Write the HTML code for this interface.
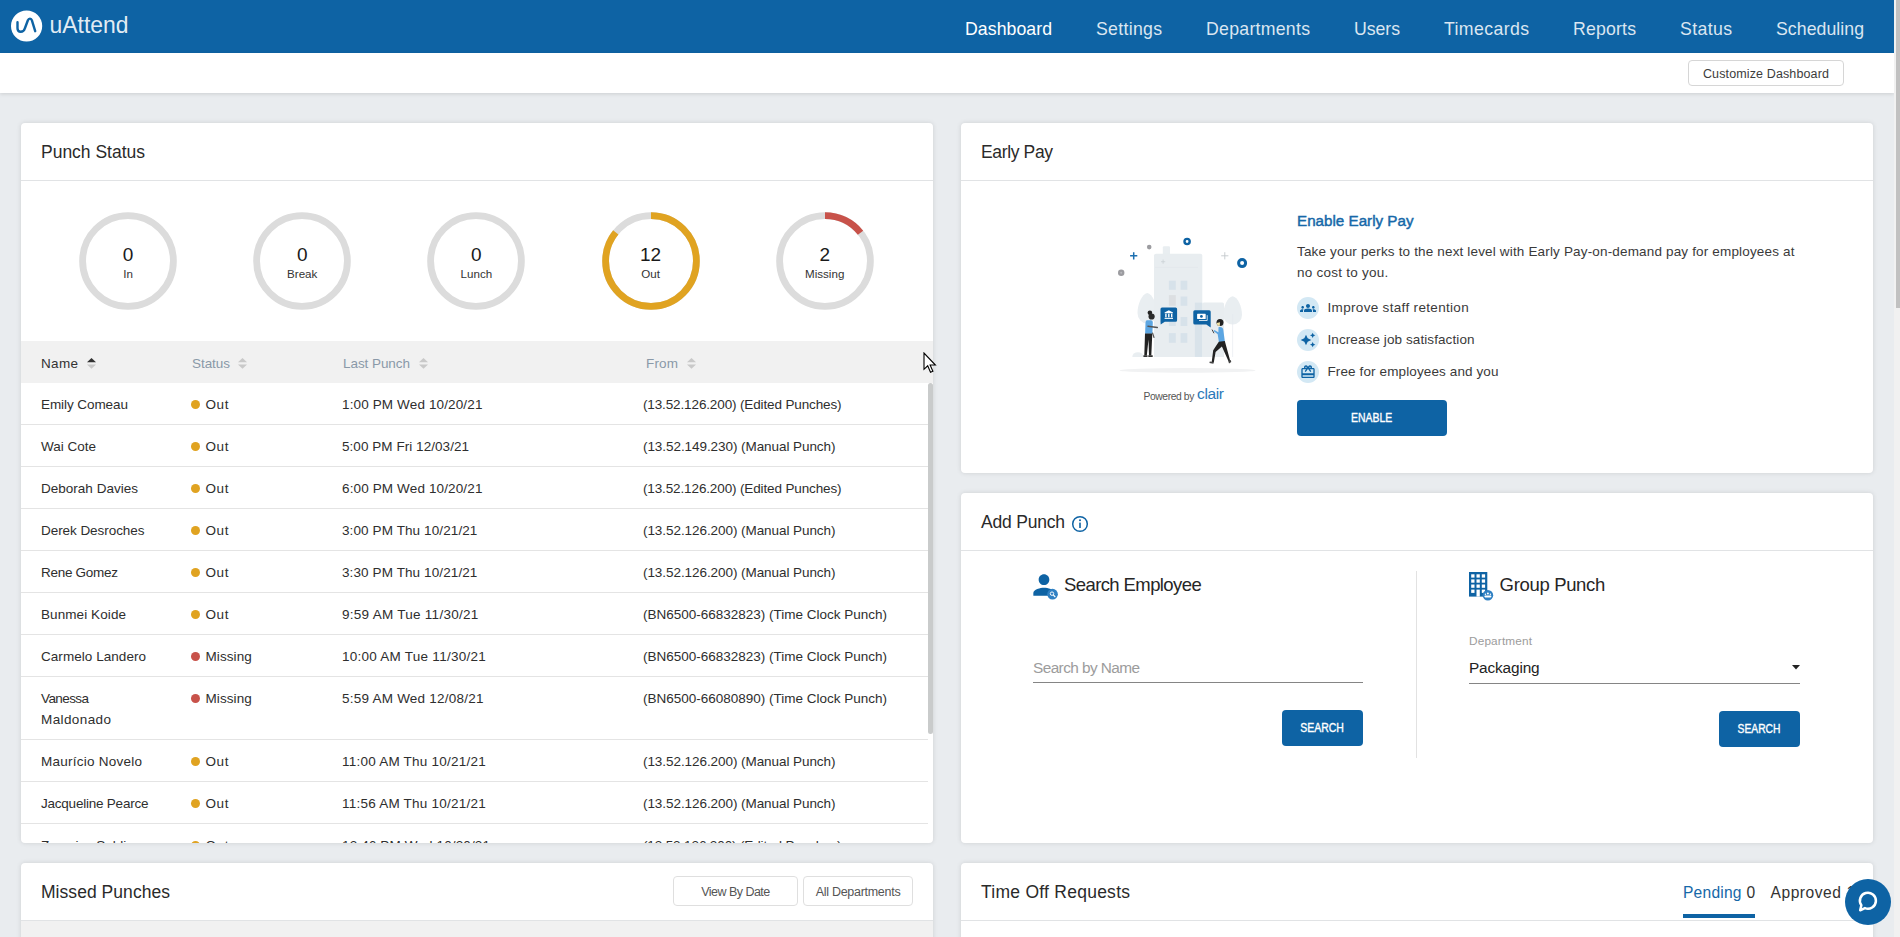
<!DOCTYPE html><html lang="en"><head>
<meta charset="utf-8">
<title>uAttend - Dashboard</title>
<style>
*{box-sizing:border-box;margin:0;padding:0}
html,body{width:1900px;height:937px;overflow:hidden}
body{background:#e9ecef;font-family:"Liberation Sans",sans-serif;font-size:13.5px;color:#212529;position:relative}
.t{position:absolute;white-space:pre;line-height:20px}
#topbar{position:absolute;left:0;top:0;width:1894px;height:53px;background:#0e63a4}
#topbar .nav{position:absolute;top:18px;font-size:17.7px;line-height:22px;color:#dbe6f1;white-space:pre}
#topbar .nav.active{color:#fff}
#subbar{position:absolute;left:0;top:53px;width:1894px;height:40px;background:#fff;box-shadow:0 1px 4px rgba(0,0,0,.13)}
#custbtn{position:absolute;left:1688px;top:7px;width:156px;height:26px;border:1px solid #d6d6d6;border-radius:4px;background:#fff;font-size:12.5px;color:#3c3c3c;text-align:center;line-height:26px}
#pagescroll{position:absolute;left:1894px;top:0;width:6px;height:937px;background:#f1f1f1}
#pagescroll div{position:absolute;left:2px;top:0;width:4px;height:308px;background:#c1c1c1}
.panel{position:absolute;background:#fff;border-radius:4px;box-shadow:0 0 5px rgba(0,0,0,.12);overflow:hidden}
.panel .ph{position:absolute;left:0;top:0;right:0;height:58px;border-bottom:1px solid #e1e3e5}
.panel .ph .title{position:absolute;left:20px;top:17px;font-size:17.5px;line-height:24px;white-space:pre;color:#2a2a2a}

#rings{position:absolute;left:0;top:89px;width:912px;height:98px}
.ring{position:absolute;top:0;width:98px;height:98px;text-align:center}
.ring svg{position:absolute;left:0;top:0}
.ring .num{position:absolute;left:0;width:98px;top:30.6px;font-size:19px;line-height:24px;color:#1a1a1a}
.ring .lbl{position:absolute;left:0;width:98px;top:53.5px;font-size:11.6px;line-height:16px;color:#333}
#thead{position:absolute;left:0;top:218px;width:912px;height:42px;background:#f1f1f1}
#thead .th{position:absolute;top:12px;line-height:21px;font-size:13.5px;color:#8a99a8;white-space:pre}
#thead .th.act{color:#333}
#thead .sort{position:absolute;top:17px}
#tbody{position:absolute;left:0;top:260px;width:907px}
.tr{position:relative;border-bottom:1px solid #e4e4e4;padding:11px 0 9px;line-height:21px;min-height:42px;color:#2e2e2e;white-space:pre}
.tr .c1{margin-left:20px;width:130px}
.tr .c2{position:absolute;left:170px;top:11px}
.tr .c3{position:absolute;left:321px;top:11px}
.tr .c4{position:absolute;left:622px;top:11px}
.dot{display:inline-block;width:9px;height:9px;border-radius:50%;margin-right:5.5px;vertical-align:0px}
.dot.out{background:#e0a321}.dot.mis{background:#c8524a}
#tscroll{position:absolute;left:907px;top:260px;width:5px;height:351px;background:#c9cbcb;border-radius:3px}

.btnp{position:absolute;background:#0e63a4;color:#fff;border-radius:4px;text-align:center;font-size:12px;white-space:pre}
.btnp span{display:inline-block;-webkit-text-stroke:.35px #fff}
.btno{position:absolute;top:13px;height:30px;border:1px solid #dfdfdf;border-radius:4px;background:#fff;color:#555;font-size:12.5px;line-height:30px;text-align:center;white-space:pre}
#ep-h{position:absolute;left:336px;top:86.5px;font-size:15.2px;line-height:22px;color:#1668a8;-webkit-text-stroke:.45px #1668a8;white-space:pre}
.ep-p{position:absolute;left:336px;font-size:13.5px;line-height:21px;color:#3a3a3a;white-space:pre}
.ep-li{position:absolute;left:336px;height:22px;line-height:22px;font-size:13.5px;color:#3a3a3a;white-space:pre}
.ep-li .ic{position:absolute;left:0;top:0;width:22px;height:22px;border-radius:50%;background:#d3e8f4}
.ep-li .ic svg{position:absolute;left:3px;top:3px}
.ep-li .tx{position:absolute;left:30.5px;top:0}
#illus{position:absolute;left:149px;top:107px}
#pby{position:absolute;left:182.5px;top:267px;font-size:10.3px;line-height:14px;color:#555;white-space:pre}
#clair{position:absolute;left:236px;top:260.5px;font-size:15.5px;line-height:20px;color:#2b79b9;white-space:pre}
.ap-h{position:absolute;top:80px;font-size:18.5px;line-height:24px;color:#262626;white-space:pre}
#ap-div{position:absolute;left:455px;top:78px;width:1px;height:187px;background:#e2e2e2}
.ul{position:absolute;height:1px;background:#858585}
#sbn{position:absolute;left:72px;top:164px;font-size:15.4px;line-height:22px;color:#9c9c9c;white-space:pre}
#deptl{position:absolute;left:508px;top:140px;font-size:11.8px;line-height:16px;color:#9c9c9c;white-space:pre}
#deptv{position:absolute;left:508px;top:164px;font-size:15.4px;line-height:22px;color:#222;white-space:pre}
#tabs .tb{position:absolute;top:19px;font-size:15.6px;line-height:22px;white-space:pre;color:#333}
#chat{position:absolute;left:1845px;top:879px;width:46px;height:46px;border-radius:50%;background:#0e63a4}
#mthead{position:absolute;left:0;top:58px;width:912px;height:42px;background:#f1f1f1}
</style>
</head>
<body>
<div id="topbar">
  <svg id="logo" style="position:absolute;left:11px;top:10px" width="130" height="34" viewBox="0 0 130 34"><circle cx="15.6" cy="16" r="15.6" fill="#fff"></circle><path d="M6.500 12.300V18.200C6.500 23 12.600 23 13.900 18.200L16.900 10.300C17.700 8 20.200 8 20.900 10.300L24.200 21.200" fill="none" stroke="#0e63a4" stroke-width="2.400" stroke-linecap="round" stroke-linejoin="round"></path><text x="38.600" y="23.350" font-family="Liberation Sans, sans-serif" font-size="23.200" fill="#fff" fill-opacity=".9" textLength="79" lengthAdjust="spacingAndGlyphs">uAttend</text></svg>
  <span class="nav active" style="left: 965px; letter-spacing: 0.059px;">Dashboard</span>
  <span class="nav" style="left: 1096px; letter-spacing: 0.297px;">Settings</span>
  <span class="nav" style="left: 1206px; letter-spacing: 0.273px;">Departments</span>
  <span class="nav" style="left: 1354px; letter-spacing: -0.051px;">Users</span>
  <span class="nav" style="left: 1444px; letter-spacing: 0.387px;">Timecards</span>
  <span class="nav" style="left: 1573px; letter-spacing: 0.177px;">Reports</span>
  <span class="nav" style="left: 1680px; letter-spacing: 0.369px;">Status</span>
  <span class="nav" style="left: 1776px; letter-spacing: 0.052px;">Scheduling</span>
</div>
<div id="subbar"><div id="custbtn"><span style="letter-spacing: 0.129px;">Customize Dashboard</span></div></div>
<div id="pagescroll"><div></div></div>

<!-- PUNCH STATUS -->
<div class="panel" id="p-punch" style="left:21px;top:123px;width:912px;height:720px">
  <div class="ph"><span class="title" style="letter-spacing: -0.01px;">Punch Status</span></div>
<div id="rings"><div class="ring" style="left:58.0px"><svg width="98" height="98" viewBox="0 0 98 98"><circle cx="49" cy="49" r="45.4" fill="none" stroke="#dcdcdc" stroke-width="6.8"></circle></svg><div class="num">0</div><div class="lbl">In</div></div><div class="ring" style="left:232.2px"><svg width="98" height="98" viewBox="0 0 98 98"><circle cx="49" cy="49" r="45.4" fill="none" stroke="#dcdcdc" stroke-width="6.8"></circle></svg><div class="num">0</div><div class="lbl">Break</div></div><div class="ring" style="left:406.4px"><svg width="98" height="98" viewBox="0 0 98 98"><circle cx="49" cy="49" r="45.4" fill="none" stroke="#dcdcdc" stroke-width="6.8"></circle></svg><div class="num">0</div><div class="lbl">Lunch</div></div><div class="ring" style="left:580.6px"><svg width="98" height="98" viewBox="0 0 98 98"><circle cx="49" cy="49" r="45.4" fill="none" stroke="#dcdcdc" stroke-width="6.8"></circle><circle cx="49" cy="49" r="45.4" fill="none" stroke="#e0a321" stroke-width="6.8" stroke-dasharray="244.51 285.26" transform="rotate(-90 49 49)"></circle></svg><div class="num">12</div><div class="lbl">Out</div></div><div class="ring" style="left:754.7px"><svg width="98" height="98" viewBox="0 0 98 98"><circle cx="49" cy="49" r="45.4" fill="none" stroke="#dcdcdc" stroke-width="6.8"></circle><circle cx="49" cy="49" r="45.4" fill="none" stroke="#c8524a" stroke-width="6.8" stroke-dasharray="40.75 285.26" transform="rotate(-90 49 49)"></circle></svg><div class="num">2</div><div class="lbl">Missing</div></div></div>
<div id="thead"><span class="th act" style="left: 20px; letter-spacing: 0.328px;">Name</span><svg class="sort" style="left:65.5px" width="9" height="11" viewBox="0 0 9 11"><path d="M0 4.3 L4.5 0 L9 4.3Z" fill="#333"></path><path d="M0 6.4 L4.5 10.7 L9 6.4Z" fill="#c9c9c9"></path></svg><span class="th" style="left: 171px; letter-spacing: -0.056px;">Status</span><svg class="sort" style="left:217px" width="9" height="11" viewBox="0 0 9 11"><path d="M0 4.3 L4.5 0 L9 4.3Z" fill="#c9c9c9"></path><path d="M0 6.4 L4.5 10.7 L9 6.4Z" fill="#c9c9c9"></path></svg><span class="th" style="left: 322px; letter-spacing: -0.061px;">Last Punch</span><svg class="sort" style="left:397.5px" width="9" height="11" viewBox="0 0 9 11"><path d="M0 4.3 L4.5 0 L9 4.3Z" fill="#c9c9c9"></path><path d="M0 6.4 L4.5 10.7 L9 6.4Z" fill="#c9c9c9"></path></svg><span class="th" style="left: 625px; letter-spacing: 0.167px;">From</span><svg class="sort" style="left:665.5px" width="9" height="11" viewBox="0 0 9 11"><path d="M0 4.3 L4.5 0 L9 4.3Z" fill="#c9c9c9"></path><path d="M0 6.4 L4.5 10.7 L9 6.4Z" fill="#c9c9c9"></path></svg></div>
<div id="tbody">
<div class="tr"><div class="c1"><span style="letter-spacing: -0.071px;">Emily Comeau</span></div><div class="c2"><i class="dot out"></i><span style="letter-spacing: 0.617px;">Out</span></div><div class="c3"><span style="letter-spacing: 0.135px;">1:00 PM Wed 10/20/21</span></div><div class="c4"><span style="letter-spacing: -0.13px;">(13.52.126.200) (Edited Punches)</span></div></div>
<div class="tr"><div class="c1"><span style="letter-spacing: -0.002px;">Wai Cote</span></div><div class="c2"><i class="dot out"></i><span style="letter-spacing: 0.617px;">Out</span></div><div class="c3"><span style="letter-spacing: 0.049px;">5:00 PM Fri 12/03/21</span></div><div class="c4"><span style="letter-spacing: -0.065px;">(13.52.149.230) (Manual Punch)</span></div></div>
<div class="tr"><div class="c1"><span style="letter-spacing: 0.014px;">Deborah Davies</span></div><div class="c2"><i class="dot out"></i><span style="letter-spacing: 0.617px;">Out</span></div><div class="c3"><span style="letter-spacing: 0.135px;">6:00 PM Wed 10/20/21</span></div><div class="c4"><span style="letter-spacing: -0.13px;">(13.52.126.200) (Edited Punches)</span></div></div>
<div class="tr"><div class="c1"><span style="letter-spacing: -0.057px;">Derek Desroches</span></div><div class="c2"><i class="dot out"></i><span style="letter-spacing: 0.617px;">Out</span></div><div class="c3"><span style="letter-spacing: 0.107px;">3:00 PM Thu 10/21/21</span></div><div class="c4"><span style="letter-spacing: -0.065px;">(13.52.126.200) (Manual Punch)</span></div></div>
<div class="tr"><div class="c1"><span style="letter-spacing: -0.283px;">Rene Gomez</span></div><div class="c2"><i class="dot out"></i><span style="letter-spacing: 0.617px;">Out</span></div><div class="c3"><span style="letter-spacing: 0.107px;">3:30 PM Thu 10/21/21</span></div><div class="c4"><span style="letter-spacing: -0.065px;">(13.52.126.200) (Manual Punch)</span></div></div>
<div class="tr"><div class="c1"><span style="letter-spacing: 0.085px;">Bunmei Koide</span></div><div class="c2"><i class="dot out"></i><span style="letter-spacing: 0.617px;">Out</span></div><div class="c3"><span style="letter-spacing: 0.273px;">9:59 AM Tue 11/30/21</span></div><div class="c4"><span style="letter-spacing: -0.004px;">(BN6500-66832823) (Time Clock Punch)</span></div></div>
<div class="tr"><div class="c1"><span style="letter-spacing: 0.049px;">Carmelo Landero</span></div><div class="c2"><i class="dot mis"></i><span style="letter-spacing: 0.089px;">Missing</span></div><div class="c3"><span style="letter-spacing: 0.255px;">10:00 AM Tue 11/30/21</span></div><div class="c4"><span style="letter-spacing: -0.004px;">(BN6500-66832823) (Time Clock Punch)</span></div></div>
<div class="tr"><div class="c1"><span style="letter-spacing: -0.591px;">Vanessa</span><br><span style="letter-spacing: 0.398px;">Maldonado</span></div><div class="c2"><i class="dot mis"></i><span style="letter-spacing: 0.089px;">Missing</span></div><div class="c3"><span style="letter-spacing: 0.231px;">5:59 AM Wed 12/08/21</span></div><div class="c4"><span style="letter-spacing: -0.004px;">(BN6500-66080890) (Time Clock Punch)</span></div></div>
<div class="tr"><div class="c1"><span style="letter-spacing: 0.247px;">Maurício Novelo</span></div><div class="c2"><i class="dot out"></i><span style="letter-spacing: 0.617px;">Out</span></div><div class="c3"><span style="letter-spacing: 0.23px;">11:00 AM Thu 10/21/21</span></div><div class="c4"><span style="letter-spacing: -0.065px;">(13.52.126.200) (Manual Punch)</span></div></div>
<div class="tr"><div class="c1"><span style="letter-spacing: -0.224px;">Jacqueline Pearce</span></div><div class="c2"><i class="dot out"></i><span style="letter-spacing: 0.617px;">Out</span></div><div class="c3"><span style="letter-spacing: 0.23px;">11:56 AM Thu 10/21/21</span></div><div class="c4"><span style="letter-spacing: -0.065px;">(13.52.126.200) (Manual Punch)</span></div></div>
<div class="tr"><div class="c1"><span style="letter-spacing: -0.019px;">Zacarias Saldivar</span></div><div class="c2"><i class="dot out"></i><span style="letter-spacing: 0.617px;">Out</span></div><div class="c3"><span style="letter-spacing: 0.132px;">12:46 PM Wed 10/20/21</span></div><div class="c4"><span style="letter-spacing: -0.13px;">(13.52.126.200) (Edited Punches)</span></div></div>
</div>
<div id="tscroll"></div>

</div>

<!-- MISSED PUNCHES -->
<div class="panel" id="p-missed" style="left:21px;top:863px;width:912px;height:100px">
  <div class="ph"><span class="title" style="letter-spacing: 0.046px;">Missed Punches</span><div class="btno" style="left:652px;width:125px"><span style="letter-spacing: -0.528px;">View By Date</span></div><div class="btno" style="left:782px;width:110px"><span style="letter-spacing: -0.281px;">All Departments</span></div></div><div id="mthead"></div>
</div>

<!-- EARLY PAY -->
<div class="panel" id="p-early" style="left:961px;top:123px;width:912px;height:350px">
  <div class="ph"><span class="title" style="letter-spacing: -0.361px;">Early Pay</span></div>
<div id="illus"><svg width="150" height="150" viewBox="0 0 150 150">
<ellipse cx="77.500" cy="140.400" rx="68" ry="2.400" fill="#f1f2f3"></ellipse>
<path d="M37.250 63C42.500 64 47 74 47 83a9.750 10.500 0 0 1-19.500 0C27.500 74 32 64 37.250 63z" fill="#e9eef1"></path>
<path d="M122.650 66.200C127.800 67.200 132 76 132 85a9.350 9.600 0 0 1-18.700 0C113.300 76 117.500 67.200 122.650 66.200z" fill="#e9eef1"></path>
<path d="M122.650 84V127" stroke="#e3e8ec" stroke-width=".6"></path>
<path d="M22.300 126.900a5.600 4.700 0 0 1 11.200 0z" fill="#e9eef1"></path>
<rect x="52.800" y="16.200" width="7.200" height="10" rx="1.200" fill="#e9eef1"></rect>
<path d="M44 126.900V25.700a2 2 0 0 1 2-2h44.300a2 2 0 0 1 2 2V126.900z" fill="#e8edf0"></path>
<path d="M45 37.400H88" stroke="#dee4e8" stroke-width=".5"></path>
<path d="M92.300 126.900V74.100a1.500 1.500 0 0 1 1.500-1.500h18.700a1.500 1.500 0 0 1 1.500 1.500V126.900z" fill="#e8edf0"></path>
<rect x="84.900" y="72.600" width="7.400" height="54.300" fill="#d9e3ea"></rect>
<g fill="#d7e2ea"><rect x="58.900" y="50.700" width="6.900" height="9.100"></rect><rect x="70.600" y="50.700" width="6.700" height="9.100"></rect><rect x="58.900" y="65.100" width="6.900" height="10.700" fill="#dcdfe2"></rect><rect x="70.600" y="66.500" width="6.700" height="9.300"></rect><rect x="58.900" y="87" width="6.900" height="9"></rect><rect x="70.600" y="87" width="6.700" height="9"></rect><rect x="58.900" y="103.100" width="6.900" height="9.700"></rect><rect x="70.600" y="103.100" width="6.700" height="9.700"></rect></g>
<g stroke="#c9ced3" stroke-width=".7" fill="none"><path d="M53.100 29.600v4.200M51 31.700h4.200"></path></g>
<g stroke="#c3c8cc" stroke-width=".9" fill="none"><path d="M114.800 22.200v7.200M111.200 25.800h7.200"></path></g>
<g stroke="#1b6fb0" stroke-width="1.500" fill="none"><path d="M23.700 22.200v7.200M20.100 25.800h7.200"></path></g>
<circle cx="77.100" cy="11.500" r="2.600" fill="#fff" stroke="#0e63a4" stroke-width="2.400"></circle>
<circle cx="132.100" cy="33.100" r="3.500" fill="#fff" stroke="#0e63a4" stroke-width="3"></circle>
<circle cx="39.200" cy="17.100" r="2.300" fill="#9c9ca0"></circle>
<circle cx="11.200" cy="42.700" r="3.200" fill="#9c9ca0"></circle><circle cx="11.200" cy="42.700" r="1" fill="#b9b9bd"></circle>
<path d="M52 77.600h13.600a1.500 1.500 0 0 1 1.500 1.500v11.100a1.500 1.500 0 0 1-1.500 1.500H54.800l-4.100 2.900-.2-2.900V79.100a1.500 1.500 0 0 1 1.500-1.500z" fill="#0e63a4"></path>
<g fill="#fff"><path d="M58.800 80.300l4.200 2.100v.8h-8.400v-.8z"></path><rect x="55.200" y="83.700" width="1.400" height="3.600"></rect><rect x="58.100" y="83.700" width="1.400" height="3.600"></rect><rect x="61" y="83.700" width="1.400" height="3.600"></rect><rect x="54.600" y="87.800" width="8.400" height="1.100"></rect></g>
<path d="M84.800 80.300h14.400a1.500 1.500 0 0 1 1.500 1.500v15.800l-4.400-3H84.800a1.500 1.500 0 0 1-1.500-1.500V81.800a1.500 1.500 0 0 1 1.500-1.500z" fill="#0e63a4"></path>
<rect x="87.100" y="83.800" width="8.600" height="5.300" rx=".6" fill="#fff"></rect><circle cx="91.400" cy="86.450" r="1.400" fill="#0e63a4"></circle><path d="M89 90.500h8.200v-5.300" fill="none" stroke="#fff" stroke-width=".8"></path>
<circle cx="39.900" cy="82.700" r="2.300" fill="#242424"></circle><circle cx="41.600" cy="86.500" r="3.100" fill="#2b2b2b"></circle>
<path d="M37 90.300h3.800c1.300 0 2 1 2 2.300l-.4 11.100h-7.300l.4-10.600c.1-1.700.5-2.800 1.500-2.800z" fill="#5ca6e2"></path>
<path d="M38 96.300l9.300 1.200" stroke="#555" stroke-width="1.500" stroke-linecap="round"></path><path d="M42.600 103l1.400 4.500" stroke="#555" stroke-width="1.100" stroke-linecap="round"></path>
<path d="M35 103.500h7.300l-1 22h-2.300l-.5-16-1.700 16h-2.500z" fill="#222"></path><path d="M33.400 125.300h4.100v1.700h-4.100zM38.300 125.300h4.400v1.700h-4.400z" fill="#333"></path>
<circle cx="110" cy="92.400" r="3.500" fill="#232323"></circle><path d="M106.600 93a2.600 3 0 0 0 3.200 2.800l.2-3.600z" fill="#f3e3a4"></path>
<path d="M108.500 97.300c2-.8 4.200 0 4.700 2l1.700 12.500-5.900 1-1.300-8.600-4.200-3.300.8-1 4.100 2.300z" fill="#5ca6e2"></path>
<path d="M102.200 99.900l1.600 3" stroke="#444" stroke-width="1" stroke-linecap="round"></path>
<path d="M108.800 111.700l6-.6 5.400 19.600-1.700.5-6.600-14.700-6.300 5.400-1.800 10.500-2.100-.3 1.500-11.800z" fill="#222"></path>
<path d="M99.800 131.500l3.900.5-.3 1.800-4-.7zM118.200 130.800l2.500-.8.600 2-2.300 1.500z" fill="#444"></path>
</svg></div>
<span id="pby" style="letter-spacing: -0.399px;">Powered by</span><span id="clair" style="letter-spacing: -0.355px;">clair</span>
<span id="ep-h" style="letter-spacing: -0.001px;">Enable Early Pay</span>
<span class="ep-p" style="top: 118px; letter-spacing: 0.162px;">Take your perks to the next level with Early Pay-on-demand pay for employees at</span>
<span class="ep-p" style="top: 139px; letter-spacing: 0.249px;">no cost to you.</span>
<div class="ep-li" style="top:174px"><span class="ic"><svg width="16" height="16" viewBox="0 0 24 24"><path d="M12 12.75c1.63 0 3.07.39 4.24.9 1.08.48 1.76 1.56 1.76 2.73V18H6v-1.61c0-1.18.68-2.26 1.76-2.73 1.17-.52 2.61-.91 4.24-.91zM4 13c1.1 0 2-.9 2-2s-.9-2-2-2-2 .9-2 2 .9 2 2 2zm1.13 1.1c-.37-.06-.74-.1-1.13-.1-.99 0-1.93.21-2.78.58C.48 14.9 0 15.62 0 16.43V18h4.5v-1.61c0-.83.23-1.61.63-2.29zM20 13c1.1 0 2-.9 2-2s-.9-2-2-2-2 .9-2 2 .9 2 2 2zm4 3.43c0-.81-.48-1.53-1.22-1.85-.85-.37-1.79-.58-2.78-.58-.39 0-.76.04-1.13.1.4.68.63 1.46.63 2.29V18H24v-1.57zM12 6c1.66 0 3 1.34 3 3s-1.34 3-3 3-3-1.34-3-3 1.34-3 3-3z" fill="#0e63a4"></path></svg></span><span class="tx" style="letter-spacing: 0.324px;">Improve staff retention</span></div>
<div class="ep-li" style="top:206px"><span class="ic"><svg width="16" height="16" viewBox="0 0 24 24"><path d="M19 9l1.25-2.75L23 5l-2.75-1.25L19 1l-1.25 2.75L15 5l2.75 1.25L19 9zm-7.5.5L9 4 6.5 9.5 1 12l5.5 2.5L9 20l2.5-5.5L17 12l-5.500-2.5zM19 15l-1.250 2.750L15 19l2.750 1.250L19 23l1.250-2.750L23 19l-2.750-1.250L19 15z" fill="#0e63a4"></path></svg></span><span class="tx" style="letter-spacing: 0.09px;">Increase job satisfaction</span></div>
<div class="ep-li" style="top:238px"><span class="ic"><svg width="16" height="16" viewBox="0 0 24 24"><path d="M20 6h-2.180c.110-.31.180-.65.180-1 0-1.660-1.340-3-3-3-1.050 0-1.960.54-2.500 1.350l-.5.67-.5-.68C10.960 2.540 10.050 2 9 2 7.340 2 6 3.340 6 5c0 .35.070.69.180 1H4c-1.110 0-1.990.89-1.990 2L2 19c0 1.110.89 2 2 2h16c1.110 0 2-.89 2-2V8c0-1.110-.89-2-2-2zm-5-2c.55 0 1 .45 1 1s-.45 1-1 1-1-.45-1-1 .45-1 1-1zM9 4c.55 0 1 .45 1 1s-.45 1-1 1-1-.45-1-1 .45-1 1-1zm11 15H4v-2h16v2zm0-5H4V8h5.080L7 10.830 8.620 12 11 8.760l1-1.360 1 1.360L15.380 12 17 10.830 14.920 8H20v6z" fill="#0e63a4"></path></svg></span><span class="tx" style="letter-spacing: 0.116px;">Free for employees and you</span></div>

<div class="btnp" style="left:336px;top:277px;width:150px;height:36px;line-height:36px"><span style="display: inline-block; transform: scaleX(0.8699);">ENABLE</span></div>

</div>

<!-- ADD PUNCH -->
<div class="panel" id="p-add" style="left:961px;top:493px;width:912px;height:350px">
  <div class="ph"><span class="title" style="letter-spacing: -0.203px;">Add Punch</span></div>
<svg style="position:absolute;left:110px;top:22px" width="18" height="18" viewBox="0 0 18 18"><circle cx="9" cy="9" r="7.3" fill="none" stroke="#0e63a4" stroke-width="1.5"></circle><rect x="8.2" y="7.6" width="1.6" height="5.4" fill="#0e63a4"></rect><circle cx="9" cy="5.3" r="1" fill="#0e63a4"></circle></svg>
<svg style="position:absolute;left:66.5px;top:75.5px" width="34" height="34" viewBox="0 0 25.5 25.5"><path d="M12 12c2.21 0 4-1.79 4-4s-1.79-4-4-4-4 1.79-4 4 1.79 4 4 4zm0 2c-2.670 0-8 1.340-8 4v2h16v-2c0-2.660-5.330-4-8-4z" fill="#0e63a4"></path><circle cx="18.4" cy="18.9" r="4" fill="#2f80c3"></circle><circle cx="18" cy="18.5" r="1.3" fill="none" stroke="#fff" stroke-width=".7"></circle><path d="M19 19.5l1.500 1.500" stroke="#fff" stroke-width=".8"></path></svg>
<span class="ap-h" style="left: 103px; letter-spacing: -0.595px;">Search Employee</span>
<span id="sbn" style="letter-spacing: -0.588px;">Search by Name</span>
<div class="ul" style="left:72px;top:189px;width:330px"></div>
<div class="btnp" style="left:321px;top:217px;width:81px;height:36px;line-height:36px"><span style="display: inline-block; transform: scaleX(0.8737);">SEARCH</span></div>
<div id="ap-div"></div>
<svg style="position:absolute;left:508px;top:79px" width="26" height="30" viewBox="0 0 26 30"><rect x="0" y="0" width="18.3" height="24.6" fill="#0e63a4"></rect><g fill="#fff"><rect x="2.200" y="2.300" width="3.300" height="3.300"></rect><rect x="7.500" y="2.300" width="3.300" height="3.300"></rect><rect x="12.800" y="2.300" width="3.300" height="3.300"></rect><rect x="2.200" y="7.400" width="3.300" height="3.300"></rect><rect x="7.500" y="7.400" width="3.300" height="3.300"></rect><rect x="12.800" y="7.400" width="3.300" height="3.300"></rect><rect x="2.200" y="12.500" width="3.300" height="3.300"></rect><rect x="7.500" y="12.500" width="3.300" height="3.300"></rect><rect x="12.800" y="12.500" width="3.300" height="3.300"></rect><rect x="2.200" y="17.600" width="3.300" height="3.300"></rect><rect x="12.800" y="17.600" width="3.300" height="3.300"></rect><rect x="7.500" y="17.600" width="3.300" height="7"></rect></g><circle cx="18.900" cy="23.200" r="5.300" fill="#2f80c3"></circle><g fill="#fff"><circle cx="18.900" cy="21.600" r="1"></circle><circle cx="16.400" cy="22.200" r=".7"></circle><circle cx="21.400" cy="22.200" r=".7"></circle><rect x="15.400" y="23.400" width="7" height="2" rx=".8"></rect></g></svg>
<span class="ap-h" style="left: 538.6px; letter-spacing: -0.332px;">Group Punch</span>
<span id="deptl" style="letter-spacing: 0.151px;">Department</span>
<span id="deptv" style="letter-spacing: -0.159px;">Packaging</span>
<svg style="position:absolute;left:831px;top:172px" width="8" height="5" viewBox="0 0 8 5"><path d="M0 0h8L4 4.500z" fill="#222"></path></svg>
<div class="ul" style="left:508px;top:190px;width:331px"></div>
<div class="btnp" style="left:758px;top:218px;width:81px;height:36px;line-height:36px"><span style="display: inline-block; transform: scaleX(0.8597);">SEARCH</span></div>

</div>

<!-- TIME OFF -->
<div class="panel" id="p-timeoff" style="left:961px;top:863px;width:912px;height:100px">
  <div class="ph"><span class="title" style="letter-spacing: 0.255px;">Time Off Requests</span><div id="tabs"><span class="tb" style="left: 722px; color: rgb(22, 104, 168); letter-spacing: 0.211px;">Pending</span><span class="tb" style="left: 785.5px; letter-spacing: -0.188px;">0</span><div style="position:absolute;left:722px;top:51px;width:72px;height:3.5px;background:#0e63a4"></div><span class="tb" style="left: 809.5px; letter-spacing: 0.533px;">Approved</span><span class="tb" style="left:885.500px">1</span></div></div>
</div>
<div id="chat"><svg width="46" height="46" viewBox="0 0 46 46"><path d="M16.350 26.290A8 8 0 1 1 19.900 29.120L15.200 31.300Z" fill="none" stroke="#fff" stroke-width="2.500" stroke-linejoin="round"></path></svg></div>
<svg id="cursor" style="position:absolute;left:922.600px;top:351.600px" width="14" height="22" viewBox="0 0 14 22"><path d="M1 1v16.300l3.700-3.500 2.800 6.400 2.400-1-2.800-6.200h5.300z" fill="#fff" stroke="#000" stroke-width="1.100"></path></svg>


</body></html>
